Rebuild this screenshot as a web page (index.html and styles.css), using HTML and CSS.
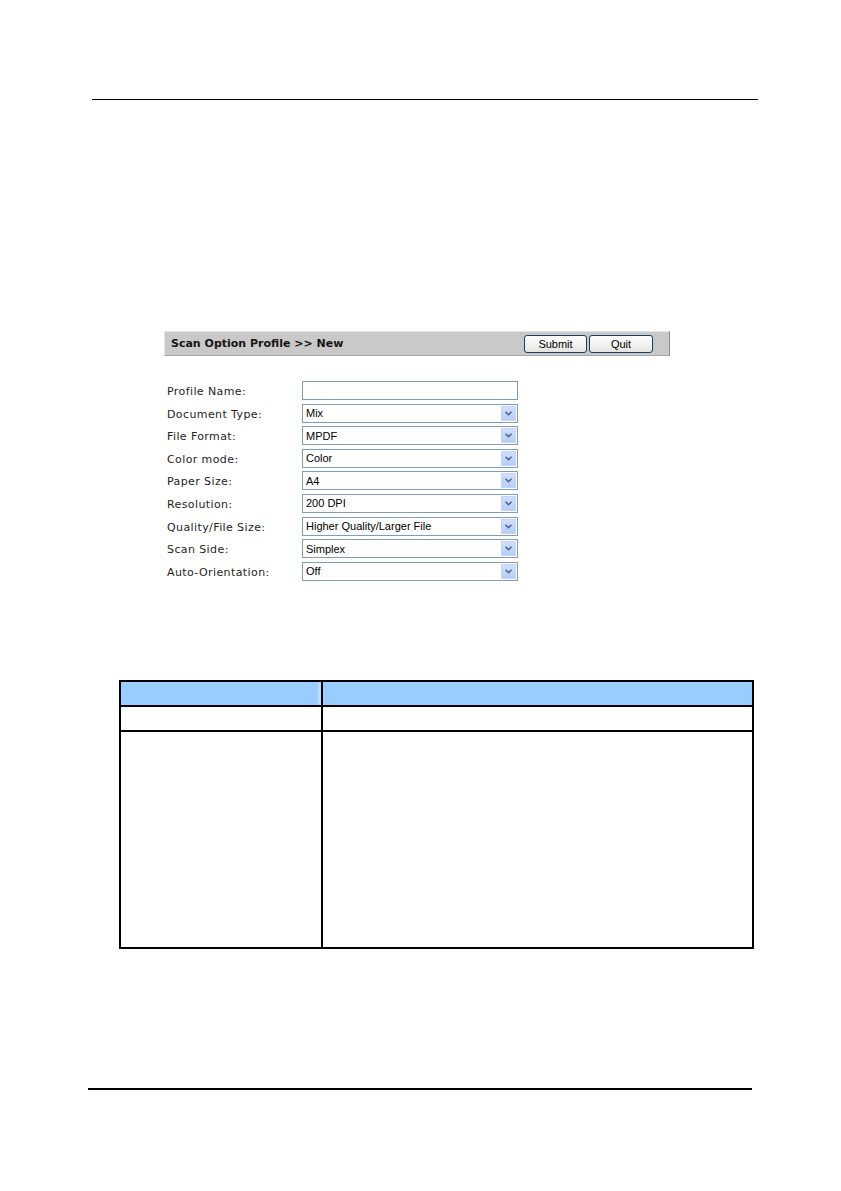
FILE: index.html
```html
<!DOCTYPE html>
<html lang="en">
<head>
<meta charset="utf-8">
<title>Scan Option Profile</title>
<link rel="stylesheet" href="styles.css">
</head>
<body>
<div class="page">
  <hr class="rule rule-top">

  <section class="panel">
    <div class="panel-bar">
      <span class="panel-title">Scan Option Profile &gt;&gt; New</span>
      <div class="panel-actions">
        <button class="btn btn-submit" type="button">Submit</button>
        <button class="btn btn-quit" type="button">Quit</button>
      </div>
    </div>

    <div class="form">
      <label class="form-label">Profile Name:</label>
      <div class="field field-text"></div>

      <label class="form-label">Document Type:</label>
      <div class="field field-select"><span class="value">Mix</span><span class="arrow"><svg viewBox="0 0 7 5" width="7" height="5"><path d="M0.5 0.8 L3.5 3.8 L6.5 0.8" fill="none" stroke="#4a5f86" stroke-width="1.5"/></svg></span></div>

      <label class="form-label">File Format:</label>
      <div class="field field-select"><span class="value">MPDF</span><span class="arrow"><svg viewBox="0 0 7 5" width="7" height="5"><path d="M0.5 0.8 L3.5 3.8 L6.5 0.8" fill="none" stroke="#4a5f86" stroke-width="1.5"/></svg></span></div>

      <label class="form-label">Color mode:</label>
      <div class="field field-select"><span class="value">Color</span><span class="arrow"><svg viewBox="0 0 7 5" width="7" height="5"><path d="M0.5 0.8 L3.5 3.8 L6.5 0.8" fill="none" stroke="#4a5f86" stroke-width="1.5"/></svg></span></div>

      <label class="form-label">Paper Size:</label>
      <div class="field field-select"><span class="value">A4</span><span class="arrow"><svg viewBox="0 0 7 5" width="7" height="5"><path d="M0.5 0.8 L3.5 3.8 L6.5 0.8" fill="none" stroke="#4a5f86" stroke-width="1.5"/></svg></span></div>

      <label class="form-label">Resolution:</label>
      <div class="field field-select"><span class="value">200 DPI</span><span class="arrow"><svg viewBox="0 0 7 5" width="7" height="5"><path d="M0.5 0.8 L3.5 3.8 L6.5 0.8" fill="none" stroke="#4a5f86" stroke-width="1.5"/></svg></span></div>

      <label class="form-label">Quality/File Size:</label>
      <div class="field field-select"><span class="value">Higher Quality/Larger File</span><span class="arrow"><svg viewBox="0 0 7 5" width="7" height="5"><path d="M0.5 0.8 L3.5 3.8 L6.5 0.8" fill="none" stroke="#4a5f86" stroke-width="1.5"/></svg></span></div>

      <label class="form-label">Scan Side:</label>
      <div class="field field-select"><span class="value">Simplex</span><span class="arrow"><svg viewBox="0 0 7 5" width="7" height="5"><path d="M0.5 0.8 L3.5 3.8 L6.5 0.8" fill="none" stroke="#4a5f86" stroke-width="1.5"/></svg></span></div>

      <label class="form-label">Auto-Orientation:</label>
      <div class="field field-select"><span class="value">Off</span><span class="arrow"><svg viewBox="0 0 7 5" width="7" height="5"><path d="M0.5 0.8 L3.5 3.8 L6.5 0.8" fill="none" stroke="#4a5f86" stroke-width="1.5"/></svg></span></div>
    </div>
  </section>

  <table class="spec">
    <colgroup>
      <col class="col-name">
      <col class="col-desc">
    </colgroup>
    <thead>
      <tr><th></th><th></th></tr>
    </thead>
    <tbody>
      <tr class="row-short"><td></td><td></td></tr>
      <tr class="row-tall"><td></td><td></td></tr>
    </tbody>
  </table>

  <hr class="rule rule-bottom">
</div>
</body>
</html>
```

FILE: styles.css
```css
html, body {
  margin: 0;
  padding: 0;
  background: #ffffff;
}

.page {
  width: 841px;
  height: 1191px;
  display: flex;
  flex-direction: column;
  align-items: flex-start;
  font-family: "DejaVu Sans", Verdana, sans-serif;
  color: #1c1c1c;
}

/* page rules */
.rule {
  border: 0;
  margin: 0;
  padding: 0;
}

.rule-top {
  width: 666px;
  height: 0;
  border-top: 1px solid #000;
  margin: 99px 0 0 92px;
}

.rule-bottom {
  width: 664px;
  height: 0;
  border-top: 2px solid #000;
  margin: 139px 0 0 88px;
}

/* scan profile panel */
.panel {
  margin: 231px 0 0 164px;
  width: 506px;
}

.panel-bar {
  box-sizing: border-box;
  height: 25px;
  display: flex;
  align-items: center;
  justify-content: space-between;
  padding: 0 16px 0 6px;
  background: #c9c9c9;
  border: 1px solid;
  border-color: #e4e4e4 #8c8c8c #a8a8a8 #e4e4e4;
}

.panel-title {
  font-family: "DejaVu Sans", Verdana, sans-serif;
  font-weight: bold;
  font-size: 11px;
  color: #151515;
}

.panel-actions {
  display: flex;
  gap: 2px;
}

.btn {
  box-sizing: border-box;
  height: 18px;
  padding: 0;
  font-family: "Liberation Sans", Arial, sans-serif;
  font-size: 11px;
  color: #000;
  background: linear-gradient(#fdfdfd, #f1f1ef 60%, #e3e3df);
  border: 1px solid #1f3b5e;
  border-radius: 3px;
}

.btn-submit { width: 63px; }
.btn-quit { width: 64px; }

/* form grid */
.form {
  margin-top: 25px;
  display: grid;
  grid-template-columns: 138px 216px;
  grid-auto-rows: 19px;
  row-gap: 3.6px;
  align-items: center;
}

.form-label {
  padding-left: 3px;
  font-size: 11px;
  letter-spacing: 0.4px;
  color: #1e1e1e;
  line-height: 19px;
  position: relative;
  top: 1px;
}

.field {
  box-sizing: border-box;
  height: 19px;
  border: 1px solid #7f9db9;
  background: #fff;
  display: flex;
  align-items: center;
  justify-content: space-between;
}

.field-select .value {
  padding-left: 3px;
  font-family: "Liberation Sans", Arial, sans-serif;
  font-size: 11px;
  color: #000;
}

.field-select .arrow {
  width: 15px;
  height: 15px;
  margin-right: 1px;
  display: flex;
  align-items: center;
  justify-content: center;
  background: linear-gradient(#d3e0fd, #b6cbf7);
  border-radius: 1px;
  box-shadow: inset 0 0 0 1px #c3d4fb;
}

/* parameter table */
.spec {
  margin: 99px 0 0 119px;
  width: 635px;
  border-collapse: collapse;
  table-layout: fixed;
}

.col-name { width: 202px; }

.spec th,
.spec td {
  border: 2px solid #000;
  padding: 0;
}

.spec th {
  height: 23px;
  background: #99ccff;
}

.spec th:first-child {
  box-shadow: inset -3px 0 0 #b8dcff;
}

.row-short td { height: 23px; }
.row-tall td { height: 215px; }
```
